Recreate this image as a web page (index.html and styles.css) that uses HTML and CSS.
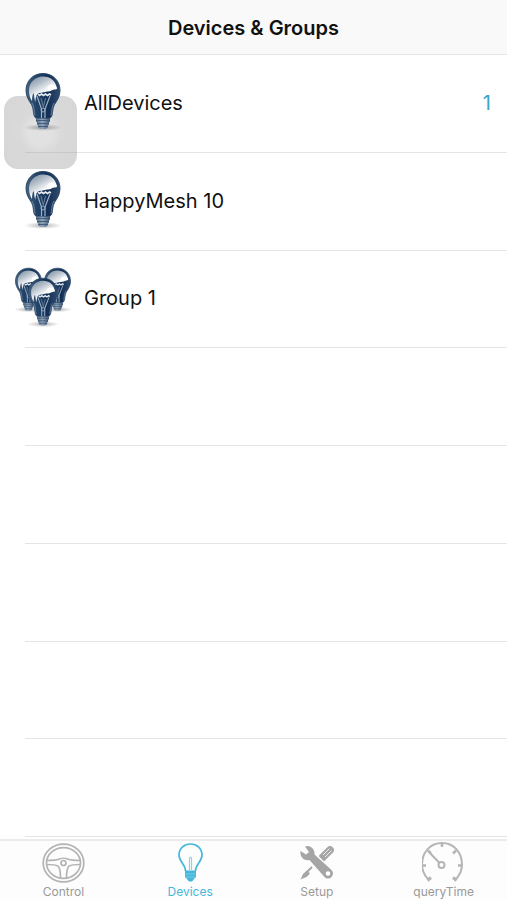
FILE: index.html
```html
<!DOCTYPE html>
<html lang="en">
<head>
<meta charset="utf-8">
<meta name="viewport" content="width=device-width, initial-scale=1">
<title>Devices &amp; Groups</title>
<link rel="stylesheet" href="styles.css">
</head>
<body>
<svg class="defs" aria-hidden="true">
  <defs>
    <linearGradient id="glass" x1="0" y1="0" x2="1" y2="0">
      <stop offset="0" stop-color="#4a6480"/>
      <stop offset=".3" stop-color="#234469"/>
      <stop offset=".65" stop-color="#132f55"/>
      <stop offset="1" stop-color="#304c6d"/>
    </linearGradient>
    <linearGradient id="shine" x1="0" y1="0" x2=".6" y2="1">
      <stop offset="0" stop-color="#74879b"/>
      <stop offset=".35" stop-color="#b3bec9"/>
      <stop offset=".7" stop-color="#ffffff"/>
      <stop offset="1" stop-color="#c9d3dd"/>
    </linearGradient>
    <linearGradient id="cap" x1="0" y1="0" x2="1" y2="0">
      <stop offset="0" stop-color="#526a87"/>
      <stop offset=".45" stop-color="#93a5b8"/>
      <stop offset="1" stop-color="#3c5473"/>
    </linearGradient>
    <radialGradient id="shade">
      <stop offset="0" stop-color="#000" stop-opacity=".3"/>
      <stop offset="1" stop-color="#000" stop-opacity="0"/>
    </radialGradient>
    <symbol id="bulb" viewBox="0 0 40 60">
      <ellipse cx="20" cy="55.500" rx="19" ry="3.500" fill="url(#shade)"/>
      <path d="M20 1.500C10 1.500 3 9 3 18.500c0 6 3 10 5.500 14 2.200 4 1.500 7 2.500 10.500C11.500 46.500 15 47.500 20 47.500s8.500-1 9-4.500c1-3.500.300-6.500 2.500-10.500 2.500-4 5.500-8 5.500-14C37 9 30 1.500 20 1.500Z" fill="url(#glass)" stroke="#2c4968" stroke-width="1"/>
      <path d="M20 4.500C11.500 4.500 6 11 6 18c0 5 1 8 3 11 0-4 .500-6 1.500-8 1 2 .500 6 2 9 0-4 .500-8 3.500-9 4-.500 5-1 8-1.500 4 0 5-1.500 7-2 1 0 2 0 3-.500C33 9 27.500 4.500 20 4.500Z" fill="url(#shine)"/>
      <path d="M24 16c1-3 4-4.500 6.500-3 2 .300 3 1.500 3.500 3.500-3.500 1-7 1-10-.500Z" fill="#fff"/>
      <path d="M15 22l1.500 1.500 2-1.500 2 1.500 2-1.500 2 1.500 2-1.500 1.500 1" fill="none" stroke="#e6edf3" stroke-width="1.600"/>
      <path d="M14 24l4.500 13v9M27 24l-5 13v9" fill="none" stroke="#9db1c5" stroke-width="1.200"/>
      <path d="M18 26l2.300 9 2.300-9" fill="none" stroke="#6f88a3" stroke-width=".900"/>
      <circle cx="20" cy="38" r="2" fill="none" stroke="#9db1c5"/>
      <path d="M9 31c2.500 4 2 8 3 12.500M31 31c-2.500 4-2 8-3 12.500" fill="none" stroke="#8097af" stroke-width=".700"/>
      <path d="M13 46.500h14v3l-1 1v2l-1.500 1.500v2l-2.500 1h-4l-2.500-1v-2L14 52.500v-2l-1-1Z" fill="url(#cap)"/>
      <path d="M13 48.500h14M14 51.500h12M15 54.500h10" stroke="#3c5778" stroke-width=".900"/>
    </symbol>
  </defs>
</svg>
<div class="app">
  <header class="nav"><h1>Devices &amp; Groups</h1></header>
  <main class="main">
    <ul class="list">
      <li class="row">
        <svg class="pic" viewBox="0 0 60 62" aria-hidden="true"><use href="#bulb" x="11" y="1" width="40" height="60"/></svg>
        <span class="name">AllDevices</span>
        <span class="count">1</span>
      </li>
      <li class="row">
        <svg class="pic" viewBox="0 0 60 62" aria-hidden="true"><use href="#bulb" x="11" y="1" width="40" height="60"/></svg>
        <span class="name">HappyMesh 10</span>
      </li>
      <li class="row">
        <svg class="pic" viewBox="0 0 60 62" aria-hidden="true">
          <use href="#bulb" x="1" y="1" width="31" height="46"/>
          <use href="#bulb" x="30" y="1" width="31" height="46"/>
          <use href="#bulb" x="14" y="11" width="34" height="51"/>
        </svg>
        <span class="name">Group 1</span>
      </li>
      <li class="row"></li>
      <li class="row"></li>
      <li class="row"></li>
      <li class="row"></li>
      <li class="row"></li>
    </ul>
    <div class="assist"></div>
  </main>
  <nav class="tabs">
    <a class="tab" href="#control">
      <svg class="icon" viewBox="0 0 44 42" fill="none" stroke="#b3b3b3" stroke-width="1.700" aria-hidden="true">
        <ellipse cx="22.500" cy="22" rx="20.300" ry="18.800"/>
        <ellipse cx="22.500" cy="22" rx="17" ry="15.300"/>
        <path d="M5.500 19.500c6 0 10-.500 13-1.500 2-1 6-1 8 0 3 1 7 1.500 13 1.500M6 23.500c6 0 9 .500 11 1.500 2 2 2.500 6 2.500 12M39 23.500c-6 0-9 .500-11 1.500-2 2-2.500 6-2.500 12"/>
        <circle cx="22.500" cy="22" r="2.500"/>
      </svg>
      <span>Control</span>
    </a>
    <a class="tab active" href="#devices" aria-current="page">
      <svg class="icon" viewBox="0 0 44 42" fill="none" stroke="#45b8dc" stroke-width="1.700" aria-hidden="true">
        <path d="M17.500 30c0-7-6.500-9-6.500-16C11 7.500 16 3 22.500 3S34 7.500 34 14c0 7-6.500 9-6.500 16"/>
        <path d="M21.500 29V17.500c0-2 2-2 2 0V29" stroke="#8ed4e9" stroke-width="1.200"/>
        <path d="M17.500 30h10v6l-2 2-1.500 2h-3l-1.500-2-2-2Z" fill="#45b8dc" stroke-width="1"/>
        <path d="M17.500 33h10M18 36h9" stroke="#87d0e7" stroke-width=".800"/>
      </svg>
      <span>Devices</span>
    </a>
    <a class="tab" href="#setup">
      <svg class="icon" viewBox="0 0 44 42" aria-hidden="true">
        <path d="M25 15 33.500 6.500c2-2 6 2 4 4L29 19Z" fill="#a5a5a5" stroke="#a5a5a5" stroke-width="2" stroke-linejoin="round"/>
        <path d="m28 14 6.500-6.500M30 16l6.500-6.500" stroke="#ededed" stroke-width="1"/>
        <path d="m17 26-6 6" stroke="#a5a5a5" stroke-width="2"/>
        <path d="M5.500 38.500 8 33l4-3.500 3 3-3.500 3.500Z" fill="#a5a5a5"/>
        <path d="M10 5.500c5-2 10 2 9.500 8L36.500 29c2 2 2 5 0 7s-5 2-7 0L14.500 19c-5 1.500-10-3-9-9l5.500 3.500L14 11Z" fill="#a5a5a5"/>
        <circle cx="33" cy="32.500" r="2.300" fill="#fff"/>
      </svg>
      <span>Setup</span>
    </a>
    <a class="tab" href="#query-time">
      <svg class="icon" viewBox="1 0 44 42" fill="none" stroke="#b5b5b5" stroke-width="2" aria-hidden="true">
        <path d="M7.500 38.500C3.500 34.500 1 29.500 1 23.500 1 11 9.500 2 21 2s20 9 20 21.500c0 6-2.500 11-6.500 15"/>
        <path d="m6.500 39.500 3.500-3M35.500 39.500l-3.500-3" stroke-width="3"/>
        <path d="M21 1.500V6M1 24.500h4M41 24.500h-4M7 9.500l3 3M35 9.500l-3 3" stroke-width="2.500"/>
        <circle cx="20.500" cy="24" r="3"/>
        <path d="M18.500 22 8 11"/>
      </svg>
      <span>queryTime</span>
    </a>
  </nav>
</div>
</body>
</html>
```
FILE: styles.css
```css
* {
  box-sizing: border-box;
}

body {
  margin: 0;
  background: #fff;
  color: #111;
  font-family: Inter, "Liberation Sans", sans-serif;
}

.defs {
  position: absolute;
  width: 0;
  height: 0;
}

.app {
  display: flex;
  flex-direction: column;
  min-height: 100vh;
}

.nav {
  height: 55px;
  display: flex;
  align-items: center;
  justify-content: center;
  padding-top: 2px;
  background: #f9f9f9;
  border-bottom: 1px solid #e4e4e4;
}

.nav h1 {
  margin: 0;
  font-size: 20px;
  line-height: 24px;
  font-weight: 600;
}

.main {
  position: relative;
  flex: 1;
  display: flex;
  padding-bottom: 2px;
}

.list {
  flex: 1;
  display: grid;
  grid-auto-rows: minmax(64px, 1fr);
  margin: 0;
  padding: 0;
  list-style: none;
}

.row {
  position: relative;
  display: flex;
  align-items: center;
  gap: 12px;
  padding: 0 16px 2px 12px;
}

.row::after {
  content: "";
  position: absolute;
  left: 25px;
  right: 0;
  bottom: 0;
  height: 1px;
  background: #e4e4e4;
}

.pic {
  width: 60px;
  height: 62px;
  margin-bottom: 2px;
  z-index: 1;
}

.name,
.count {
  font-size: 20px;
  line-height: 24px;
}

.count {
  margin-left: auto;
  color: #35a5cc;
}

.assist {
  position: absolute;
  left: 4px;
  top: 41px;
  width: 73px;
  height: 73px;
  border-radius: 14px;
  background: radial-gradient(circle, rgba(170, 170, 170, 0.35) 0 22%, rgba(150, 150, 150, 0.36) 42%, rgba(140, 140, 140, 0.36) 100%);
}

.tabs {
  display: grid;
  grid-template-columns: repeat(4, 1fr);
  height: 61px;
  border-top: 2px solid #ebebeb;
  background: #fdfdfd;
}

.tab {
  display: flex;
  flex-direction: column;
  align-items: center;
  color: #999;
  font-size: 12px;
  line-height: 14px;
  text-decoration: none;
}

.tab.active {
  color: #45b8dc;
}

.icon {
  width: 44px;
  height: 42px;
  margin-bottom: 2px;
}
```
